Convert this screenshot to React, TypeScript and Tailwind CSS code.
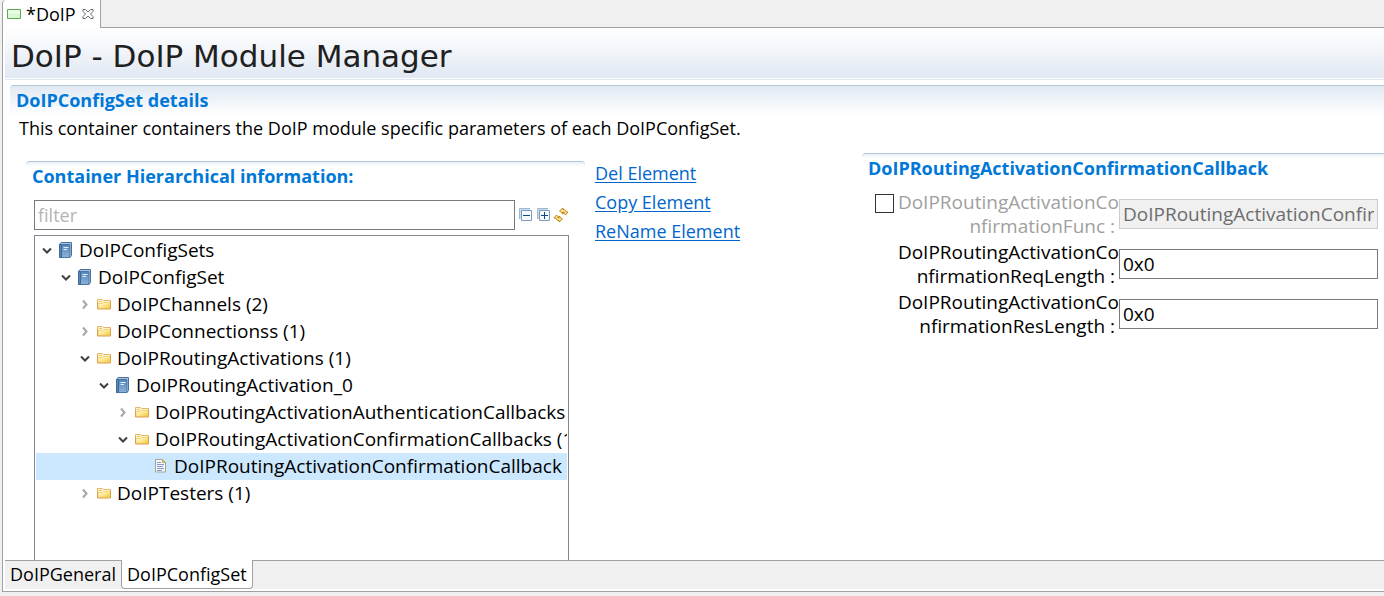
import { useState } from "react";

type IconKind = "book" | "folder" | "file";

interface TreeRow {
  id: string;
  label: string;
  level: number;
  icon: IconKind;
  state: "open" | "closed" | "leaf";
}

const rows: TreeRow[] = [
  { id: "sets", label: "DoIPConfigSets", level: 0, icon: "book", state: "open" },
  { id: "set", label: "DoIPConfigSet", level: 1, icon: "book", state: "open" },
  { id: "channels", label: "DoIPChannels (2)", level: 2, icon: "folder", state: "closed" },
  { id: "connections", label: "DoIPConnectionss (1)", level: 2, icon: "folder", state: "closed" },
  { id: "activations", label: "DoIPRoutingActivations (1)", level: 2, icon: "folder", state: "open" },
  { id: "activation0", label: "DoIPRoutingActivation_0", level: 3, icon: "book", state: "open" },
  { id: "auth", label: "DoIPRoutingActivationAuthenticationCallbacks", level: 4, icon: "folder", state: "closed" },
  { id: "confirms", label: "DoIPRoutingActivationConfirmationCallbacks (1)", level: 4, icon: "folder", state: "open" },
  { id: "confirm", label: "DoIPRoutingActivationConfirmationCallback", level: 5, icon: "file", state: "leaf" },
  { id: "testers", label: "DoIPTesters (1)", level: 2, icon: "folder", state: "closed" },
];

const indents = ["pl-0", "pl-[19px]", "pl-[38px]", "pl-[57px]", "pl-[76px]", "pl-[95px]"];

function BookIcon() {
  return (
    <svg width="16" height="18" viewBox="0 0 16 18" aria-hidden="true">
      <defs>
        <linearGradient id="bookFace" x1="0" y1="0" x2="0" y2="1">
          <stop offset="0" stopColor="#5585bd" />
          <stop offset="1" stopColor="#8bb2d8" />
        </linearGradient>
      </defs>
      <path d="M1.500 3.500 3 1.500h10.500v13l-1.500 2h-10.500z" fill="#c5d6e8" stroke="#4a719b" />
      <path d="M3.500 3.500h8.500v13H3.500z" fill="url(#bookFace)" stroke="#4674a5" />
      <path d="M1.500 3.500v13h2v-13z" fill="#5a87ba" stroke="#3f6a98" />
      <path d="M3 2.500h9.500" stroke="#a9c3de" />
      <path d="M5.500 6.500h5M5.500 8.500h3.500" stroke="#e6eff8" />
    </svg>
  );
}

function FolderIcon() {
  return (
    <svg width="16" height="16" viewBox="0 0 16 16" aria-hidden="true">
      <defs>
        <linearGradient id="folderFace" x1="0" y1="0" x2="1" y2="1">
          <stop offset="0" stopColor="#fffbe2" />
          <stop offset="0.5" stopColor="#fbe793" />
          <stop offset="1" stopColor="#f2c620" />
        </linearGradient>
      </defs>
      <path d="M1.500 12.500v-9h5l1 1h7v8z" fill="#fdf3cc" stroke="#e3b567" />
      <path d="M2 7.500h4.500l1-1H14v6H2z" fill="url(#folderFace)" stroke="#f2d477" />
      <path d="M1.500 6v7h13V5" fill="none" stroke="#dda04d" />
      <path d="M3 5.500h3" stroke="#e9c36f" />
    </svg>
  );
}

function FileIcon() {
  return (
    <svg width="16" height="16" viewBox="0 0 16 16" aria-hidden="true">
      <path d="M2.500 1.500h7l3 3v9.500h-10z" fill="#f5f8fe" stroke="#a5a58c" />
      <path d="M9.500 1.500v3h3z" fill="#e2c27a" stroke="#c6a961" />
      <path d="M4 4.500h4M4 6.500h7M4 8.500h6M4 10.500h7M4 12.500h5" stroke="#8398cd" />
    </svg>
  );
}

function Chevron({ open }: { open: boolean }) {
  return (
    <svg width="14" height="14" viewBox="0 0 14 14" fill="none" strokeWidth="2" aria-hidden="true">
      {open ? <path d="M3 5.500 7 9.500l4-4" stroke="#404040" /> : <path d="M5 3.500 8.500 7.500 5 11.500" stroke="#a6a6a6" />}
    </svg>
  );
}

function StackIcon({ plus }: { plus: boolean }) {
  return (
    <svg width="14" height="14" viewBox="0 0 14 14" aria-hidden="true">
      <path d="M.5 11V.5H11" fill="none" stroke="#a3b6d0" />
      <path d="M1 1h10v2H3v8H1z" fill="#c2e0f4" />
      <path d="M2.500 2.500h10v10h-10z" fill="#f2faff" stroke="#8498b8" />
      <path d="M4 7.500h7" stroke="#0c4a82" />
      {plus && <path d="M7.500 4v7" stroke="#0c4a82" />}
    </svg>
  );
}

function SyncIcon() {
  return (
    <svg width="16" height="16" viewBox="0 0 16 16" aria-hidden="true">
      <g fill="#fbe08a" stroke="#b87a10" strokeWidth="0.9" strokeLinejoin="round">
        <path d="M6.500 4 10 1v1.500c2 0 3 1 3.500 2.500h1.500L12.500 8 10 5.500h1.300L10 5v2z" />
        <path d="M9.500 12 6 15v-1.500c-2 0-3-1-3.500-2.500H1L3.500 8 6 10.500H4.700L6 11V9z" />
      </g>
    </svg>
  );
}

function SectionTop({ className }: { className: string }) {
  return (
    <div
      aria-hidden="true"
      className={`h-2 rounded-t border-t border-[#b4c8dc] bg-gradient-to-b from-[#e8eff7] to-white to-60% ${className}`}
    />
  );
}

const fields = [
  { id: "func", line1: "DoIPRoutingActivationCo", line2: "nfirmationFunc :", value: "DoIPRoutingActivationConfirmationFunc", optional: true },
  { id: "req", line1: "DoIPRoutingActivationCo", line2: "nfirmationReqLength :", value: "0x0", optional: false },
  { id: "res", line1: "DoIPRoutingActivationCo", line2: "nfirmationResLength :", value: "0x0", optional: false },
];

export default function App() {
  const [selected, setSelected] = useState("confirm");
  const [enabled, setEnabled] = useState(false);

  return (
    <div className="flex min-h-screen flex-col bg-[#f0f0f0] pb-1 pl-[2px] font-['Open_Sans',sans-serif] text-[18px] leading-6 text-black">
      <div className="flex h-7 shrink-0">
        <div className="flex w-[99px] items-center rounded-tl border-r border-l border-[#a0a0a0] bg-white pl-1">
          <svg width="14" height="12" viewBox="0 0 14 12" aria-hidden="true">
            <path d="M.5 1.500h13v9H.5z" fill="#dcf5d6" stroke="#5faa4f" />
            <path d="M1.500 2.500h11v3h-11z" fill="#eefbea" />
          </svg>
          <span className="ml-[5px]">*DoIP</span>
          <button type="button" aria-label="Close tab" className="ml-[6px]">
            <svg width="12" height="12" viewBox="0 0 12 12" aria-hidden="true">
              <path
                d="M1 1.500h2.500L6 4l2.500-2.500H11V3.500L8.500 6 11 8.500v2H8.500L6 8l-2.500 2.500H1v-2L3.500 6 1 3.500z"
                fill="#fff"
                stroke="#6a6a6a"
              />
            </svg>
          </button>
        </div>
        <div className="flex-1 border-b border-[#a0a0a0]" />
      </div>

      <main className="flex flex-1 flex-col border-b border-l border-[#a0a0a0] bg-white pb-[2px] pl-[2px]">
        <header className="mb-[5px] border-b border-[#dfe7f0] pb-px">
          <h1 className="h-[50px] bg-gradient-to-b from-white to-[#e1e8f2] pl-[6px] font-['DejaVu_Sans',sans-serif] text-[31px] leading-[56px] text-[#202020]">
            DoIP - DoIP Module Manager
          </h1>
        </header>

        <section className="flex flex-1 flex-col pl-[5px]">
          <div className="rounded-tl border-t border-[#b4c8dc] bg-gradient-to-b from-[#e1e9f3] to-white pl-[6px]">
            <h2 className="h-[30px] text-[18px] leading-7 font-bold text-[#0078d7]">DoIPConfigSet details</h2>
          </div>
          <p className="pl-[9px]">This container containers the DoIP module specific parameters of each DoIPConfigSet.</p>

          <div className="mt-[13px] grid flex-1 grid-cols-[minmax(0,569fr)_minmax(0,267fr)_minmax(0,522fr)] pl-4">
            <div className="flex flex-col pt-2">
              <SectionTop className="mr-[10px]" />
              <h3 className="-mt-[5px] pl-[6px] text-[18px] leading-6 font-bold text-[#0078d7]">Container Hierarchical information:</h3>
              <div className="mt-3 mr-[26px] ml-2 flex items-center">
                <input
                  aria-label="filter"
                  placeholder="filter"
                  className="h-[30px] min-w-0 flex-1 border border-[#7a7a7a] bg-white px-[3px] placeholder:text-[#b4b4b4]"
                />
                <button type="button" aria-label="Collapse all" className="ml-1"><StackIcon plus={false} /></button>
                <button type="button" aria-label="Expand all" className="ml-1"><StackIcon plus /></button>
                <button type="button" aria-label="Refresh" className="ml-[2px]"><SyncIcon /></button>
              </div>
              <ul role="tree" className="mt-[5px] mr-[26px] ml-2 flex-1 overflow-hidden border border-b-0 border-[#828790] p-px text-[19px]">
                {rows.map((row) => (
                  <li
                    key={row.id}
                    role="treeitem"
                    aria-level={row.level + 1}
                    aria-selected={selected === row.id}
                    aria-expanded={row.state === "leaf" ? undefined : row.state === "open"}
                    onClick={() => setSelected(row.id)}
                    className={`h-[27px] cursor-default overflow-hidden ${indents[row.level]} ${selected === row.id ? "bg-[#cce8ff]" : ""}`}
                  >
                    <div className="flex h-[26px] items-center whitespace-nowrap">
                      <span className="ml-1 w-[18px] shrink-0">{row.state !== "leaf" && <Chevron open={row.state === "open"} />}</span>
                      <span className="w-[21px] shrink-0">
                        {row.icon === "book" && <BookIcon />}
                        {row.icon === "folder" && <FolderIcon />}
                        {row.icon === "file" && <FileIcon />}
                      </span>
                      <span>{row.label}</span>
                    </div>
                  </li>
                ))}
              </ul>
            </div>

            <nav className="flex flex-col items-start gap-[5px] pt-2 text-[#0066cc]">
              <a href="#delete" className="underline underline-offset-2">Del Element</a>
              <a href="#copy" className="underline underline-offset-2">Copy Element</a>
              <a href="#rename" className="underline underline-offset-2">ReName Element</a>
            </nav>

            <div>
              <SectionTop className="rounded-tr-none" />
              <h3 className="-mt-[5px] pl-[6px] text-[18px] leading-6 font-bold text-[#0078d7]">DoIPRoutingActivationConfirmationCallback</h3>
              <div className="mt-[10px] flex flex-col gap-[2px] pr-[6px] pl-[13px] text-[19px]">
                {fields.map((field) => {
                  const off = field.optional && !enabled;
                  return (
                    <div key={field.id} className="flex h-12 items-center">
                      <div className="flex w-[22px] shrink-0 self-start pt-1">
                        {field.optional && (
                          <input
                            type="checkbox"
                            aria-label="Enable DoIPRoutingActivationConfirmationFunc"
                            checked={enabled}
                            onChange={(e) => setEnabled(e.target.checked)}
                            className="h-[19px] w-[19px] appearance-none border border-[#333] bg-white checked:bg-[#0078d7]"
                          />
                        )}
                      </div>
                      <label htmlFor={field.id} className={`w-[222px] shrink-0 text-right whitespace-nowrap ${off ? "text-[#a0a0a0]" : ""}`}>
                        {field.line1}
                        <br />
                        <span className="pr-1">{field.line2}</span>
                      </label>
                      <input
                        id={field.id}
                        defaultValue={field.value}
                        disabled={off}
                        className="h-[30px] min-w-0 flex-1 border border-[#7a7a7a] bg-white px-[3px] disabled:border-[#cccccc] disabled:bg-[#f0f0f0] disabled:text-[#6d6d6d]"
                      />
                    </div>
                  );
                })}
              </div>
            </div>
          </div>
        </section>

        <div role="tablist" className="flex h-[29px] shrink-0 bg-[#f0f0f0]">
          <button type="button" role="tab" aria-selected="false" className="border-t border-[#a0a0a0] px-[5px] pb-[2px]">DoIPGeneral</button>
          <button type="button" role="tab" aria-selected="true" className="rounded-b border border-t-0 border-[#a0a0a0] bg-white px-[5px]">DoIPConfigSet</button>
          <div className="flex-1 border-t border-[#a0a0a0]" />
        </div>
      </main>
    </div>
  );
}
